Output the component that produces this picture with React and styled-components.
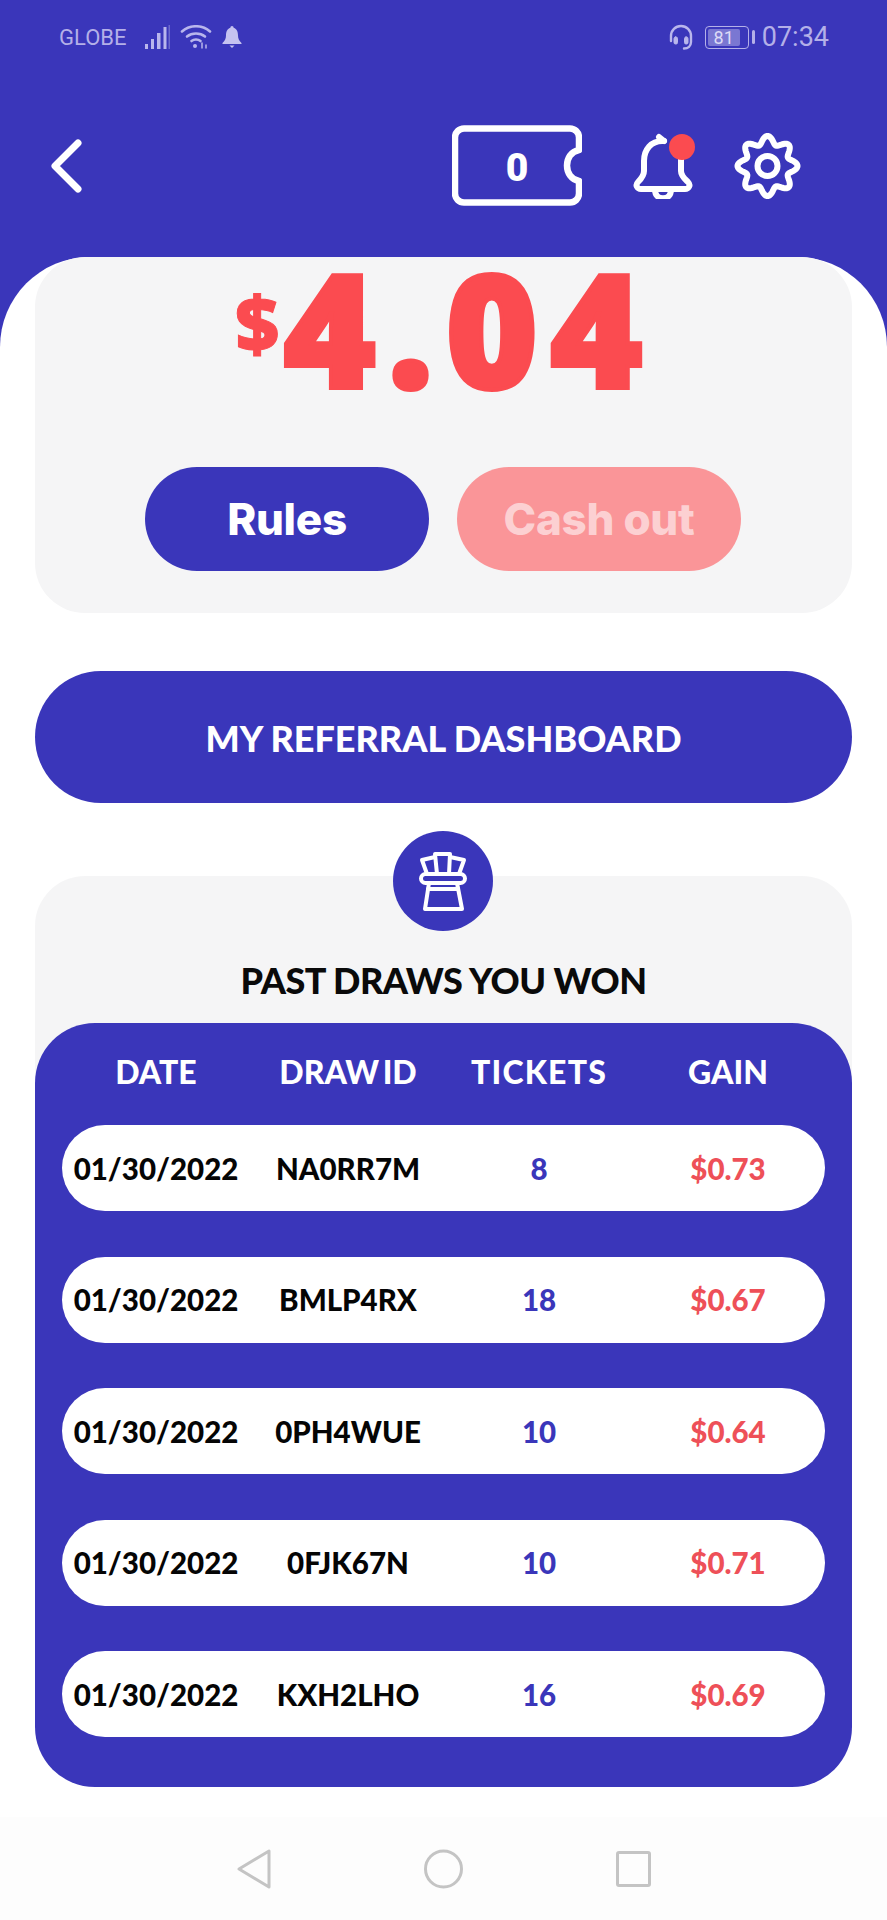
import React from "react";
import styled, { createGlobalStyle } from "styled-components";

const BLUE = "#3a36ba";
const RED = "#fb4b50";
const FONT = `"Lato", "Liberation Sans", sans-serif`;
const HEAVY = `"Inter", "Liberation Sans", sans-serif`;
const BLACK = `"Roboto", "Liberation Sans", sans-serif`;
const AMOUNT = `"Open Sans", "Liberation Sans", sans-serif`;

const GlobalStyle = createGlobalStyle`
  html, body {
    margin: 0;
    padding: 0;
    background: #fff;
  }
  * {
    box-sizing: border-box;
  }
`;

const draws = [
  { id: "NA0RR7M", tickets: 8, gain: "$0.73" },
  { id: "BMLP4RX", tickets: 18, gain: "$0.67" },
  { id: "0PH4WUE", tickets: 10, gain: "$0.64" },
  { id: "0FJK67N", tickets: 10, gain: "$0.71" },
  { id: "KXH2LHO", tickets: 16, gain: "$0.69" },
];

// wavy outline for the settings gear
const gearPath = () => {
  const pts = [];
  for (let i = 0; i < 240; i++) {
    const a = (i / 240) * Math.PI * 2;
    const r = 26 + 4 * Math.cos(8 * a);
    pts.push(`${(33 + r * Math.sin(a)).toFixed(2)} ${(33 - r * Math.cos(a)).toFixed(2)}`);
  }
  return `M${pts.join("L")}Z`;
};

function App() {
  return (
    <>
      <GlobalStyle />
      <Screen>
        <StatusBar>
          <StatusGroup>
            <Carrier>GLOBE</Carrier>
            <svg width="26" height="24" viewBox="0 0 26 24" fill="#b9b6ec">
              <rect x="1" y="19" width="3" height="5" />
              <rect x="7" y="14" width="3" height="10" />
              <rect x="13" y="8" width="3.5" height="16" />
              <rect x="19.5" y="2" width="3" height="22" />
              <rect x="24.5" y="0" width="1.5" height="24" opacity="0.4" />
            </svg>
            <svg width="32" height="24" viewBox="0 0 32 24" fill="none" stroke="#b9b6ec" strokeWidth="2.6" strokeLinecap="round">
              <path d="M2 6.5C10 -0.5 22 -0.5 30 6.5" />
              <path d="M7 11.5C12 7.5 20 7.5 25 11.5" />
              <path d="M11.5 16C14 14 18 14 20.5 16" />
              <circle cx="15" cy="21" r="2" fill="#b9b6ec" stroke="none" />
              <path d="M22 18v5M26 20v3" strokeWidth="1.5" />
            </svg>
            <svg width="20" height="22" viewBox="0 0 20 22" fill="#c5c2f0">
              <path d="M10 0c1 0 1.6.8 1.6 1.8C15 3 16 6 16 9.5c0 3 1 5 3.5 7.5v1H.5v-1C3 14.500 4 12.500 4 9.500 4 6 5 3 8.400 1.800 8.400.8 9 0 10 0Z" />
              <path d="M7.500 19.500h5L10 22Z" />
            </svg>
          </StatusGroup>
          <StatusGroup>
            <svg width="24" height="26" viewBox="0 0 24 26" fill="none" stroke="#b9b6ec" strokeWidth="2.4" strokeLinecap="round">
              <path d="M2 17V12a10 10 0 0 1 20 0v6c0 4-3 6.500-7 6.500" />
              <rect x="5" y="13" width="3.500" height="7" rx="1.500" fill="#b9b6ec" strokeWidth="1" />
              <rect x="15.500" y="13" width="3.500" height="7" rx="1.500" fill="#b9b6ec" strokeWidth="1" />
            </svg>
            <Battery>
              <BatteryLevel>81</BatteryLevel>
            </Battery>
            <Clock>07:34</Clock>
          </StatusGroup>
        </StatusBar>

        <TopBar>
          <BackIcon width="32" height="54" viewBox="0 0 32 54" fill="none" stroke="#fff" strokeWidth="7" strokeLinecap="round" strokeLinejoin="round">
            <path d="M28 4 5 27l23 23" />
          </BackIcon>
          <TicketBox>
            <svg width="130" height="81" viewBox="0 0 130 81" fill="none" stroke="#fff" strokeWidth="6.500" strokeLinejoin="round">
              <path d="M12 3.500H118a9 9 0 0 1 9 9V25c-16 3-16 28 0 31v12.500a9 9 0 0 1-9 9H12a9 9 0 0 1-9-9V12.500a9 9 0 0 1 9-9Z" />
            </svg>
            <TicketCount>0</TicketCount>
          </TicketBox>
          <BellWrap>
            <svg width="60" height="66" viewBox="0 0 60 66" fill="none" stroke="#fff" strokeWidth="6" strokeLinecap="round" strokeLinejoin="round">
              <path d="M31 8C18 7 11 17 11 28v10c0 5-3 8-6 11-3 3-1 7 3 7h44c4 0 6-4 3-7-3-3-7-6-7-11V22" />
              <path d="M26 4l5 4" />
              <path d="M22 57c0 11 16 11 16 0" />
            </svg>
            <RedDot />
          </BellWrap>
          <svg width="67" height="66" viewBox="0 0 66 66" fill="none" stroke="#fff" strokeWidth="6">
            <path d={gearPath()} strokeLinejoin="round" />
            <circle cx="33" cy="33" r="10" />
          </svg>
        </TopBar>

        <Sheet>
          <Content>
            <BalanceCard>
              <Amount>
                <Dollar>$</Dollar>
                <Digits>4.04</Digits>
              </Amount>
              <ButtonRow>
                <PillButton>Rules</PillButton>
                <PillButton $muted>Cash out</PillButton>
              </ButtonRow>
            </BalanceCard>

            <ReferralButton>MY REFERRAL DASHBOARD</ReferralButton>

            <DrawsCard>
              <HatBadge>
                <svg width="48" height="60" viewBox="0 0 48 60" fill="none" stroke="#fff" strokeWidth="4" strokeLinejoin="round" strokeLinecap="round">
                  <rect x="2" y="23" width="44" height="9" rx="4.500" />
                  <path d="M10 32 6 58H43L38 32" />
                  <path d="M9 38H39" />
                  <path d="M16 3H31L30 23H18Z" />
                  <path d="M16 6 3 9 8 23M31 6 45 9 40 23" />
                </svg>
              </HatBadge>
              <DrawsTitle>PAST DRAWS YOU WON</DrawsTitle>
              <DrawsPanel>
                <HeaderRow>
                  <span>DATE</span>
                  <span>DRAW ID</span>
                  <TicketsHead>TICKETS</TicketsHead>
                  <span>GAIN</span>
                </HeaderRow>
                <RowList>
                  {draws.map((d) => (
                    <DrawRow key={d.id}>
                      <span>01/30/2022</span>
                      <span>{d.id}</span>
                      <Tickets>{d.tickets}</Tickets>
                      <Gain>{d.gain}</Gain>
                    </DrawRow>
                  ))}
                </RowList>
              </DrawsPanel>
            </DrawsCard>
          </Content>

          <NavBar>
            <svg width="34" height="40" viewBox="0 0 34 40" fill="none" stroke="#c4c4c4" strokeWidth="3" strokeLinejoin="round">
              <path d="M32 2V38L2 20Z" />
            </svg>
            <svg width="39" height="40" viewBox="0 0 39 40" fill="none" stroke="#c4c4c4" strokeWidth="3">
              <circle cx="19.500" cy="20" r="18" />
            </svg>
            <svg width="35" height="36" viewBox="0 0 35 36" fill="none" stroke="#c4c4c4" strokeWidth="3" strokeLinejoin="round">
              <rect x="1.500" y="1.500" width="32" height="33" rx="1.500" />
            </svg>
          </NavBar>
        </Sheet>
      </Screen>
    </>
  );
}

const Screen = styled.div`
  width: 887px;
  height: 1920px;
  overflow: hidden;
  display: flex;
  flex-direction: column;
  background: ${BLUE};
  font-family: ${FONT};
`;

const StatusBar = styled.div`
  height: 74px;
  padding: 0 58px 0 59px;
  display: flex;
  align-items: center;
  justify-content: space-between;
`;

const StatusGroup = styled.div`
  display: flex;
  align-items: center;
  gap: 10px;
`;

const Carrier = styled.span`
  font: 400 22px "Roboto", sans-serif;
  color: #b4b0e8;
  margin-right: 8px;
`;

const Clock = styled.span`
  font: 400 27px "Roboto", sans-serif;
  color: #b4b0e8;
`;

const Battery = styled.div`
  width: 44px;
  height: 23px;
  padding: 2px;
  border: 1.5px solid #b4b0e8;
  border-radius: 4px;
  margin-left: 2px;
  margin-right: 3px;
  position: relative;

  &::after {
    content: "";
    position: absolute;
    right: -7px;
    top: 3px;
    width: 3px;
    height: 14px;
    border-radius: 2px;
    background: #b4b0e8;
  }
`;

const BatteryLevel = styled.div`
  width: 84%;
  height: 100%;
  border-radius: 2px;
  background: #7a77d2;
  color: #dcdaf6;
  font: 400 18px/17px "Roboto", sans-serif;
  text-align: center;
`;

const TopBar = styled.div`
  height: 183px;
  padding: 0 86px 0 50px;
  display: flex;
  align-items: center;
`;

const BackIcon = styled.svg`
  margin-right: auto;
`;

const TicketBox = styled.div`
  position: relative;
  width: 130px;
  height: 81px;
  margin-right: 51px;
  display: flex;
  align-items: center;
  justify-content: center;

  svg {
    position: absolute;
    inset: 0;
  }
`;

const TicketCount = styled.span`
  font-family: ${BLACK};
  font-size: 39px;
  font-weight: 900;
  color: #fff;
  margin-top: 5px;
`;

const BellWrap = styled.div`
  position: relative;
  width: 60px;
  height: 66px;
  margin-right: 41px;

  svg {
    display: block;
  }
`;

const RedDot = styled.span`
  position: absolute;
  top: 1px;
  right: -2px;
  width: 26px;
  height: 26px;
  border-radius: 50%;
  background: ${RED};
`;

const Sheet = styled.div`
  flex: 1;
  display: flex;
  flex-direction: column;
  background: #fff;
  border-radius: 90px 90px 0 0;
`;

const Content = styled.div`
  flex: 1;
  padding: 0 35px 0 35px;
`;

const BalanceCard = styled.section`
  height: 356px;
  background: #f5f5f6;
  border-radius: 50px;
`;

const Amount = styled.div`
  height: 210px;
  padding-right: 8px;
  display: flex;
  align-items: flex-start;
  justify-content: center;
  color: ${RED};
  font-family: ${AMOUNT};
  font-weight: 800;
`;

const Dollar = styled.span`
  font-size: 76px;
  line-height: 80px;
  margin-top: 26px;
  margin-right: 4px;
  -webkit-text-stroke: 1px ${RED};
`;

const Digits = styled.span`
  font-size: 158px;
  line-height: 180px;
  letter-spacing: 12px;
  margin-right: -11px;
  margin-top: -20px;
  -webkit-text-stroke: 4px ${RED};
`;

const ButtonRow = styled.div`
  display: flex;
  justify-content: center;
  gap: 28px;
  padding-right: 1px;
`;

const PillButton = styled.div`
  width: 284px;
  height: 104px;
  border-radius: 52px;
  display: flex;
  align-items: center;
  justify-content: center;
  font-family: ${HEAVY};
  font-size: 44px;
  font-weight: 800;
  letter-spacing: -0.3px;
  background: ${(p) => (p.$muted ? "#fa9598" : BLUE)};
  color: ${(p) => (p.$muted ? "#fcd0d2" : "#fff")};
`;

const ReferralButton = styled.div`
  margin-top: 58px;
  height: 132px;
  padding-top: 2px;
  border-radius: 66px;
  background: ${BLUE};
  color: #fff;
  display: flex;
  align-items: center;
  justify-content: center;
  font-size: 36px;
  font-weight: 900;
`;

const DrawsCard = styled.section`
  position: relative;
  margin-top: 73px;
  padding-top: 85px;
  background: linear-gradient(#f5f5f6 220px, transparent 220px);
  border-radius: 50px 50px 0 0;
`;

const HatBadge = styled.div`
  position: absolute;
  top: -45px;
  left: calc(50% - 1px);
  transform: translateX(-50%);
  width: 100px;
  height: 100px;
  border-radius: 50%;
  background: ${BLUE};
  display: flex;
  align-items: center;
  justify-content: center;
`;

const DrawsTitle = styled.h2`
  margin: 0 0 24px;
  height: 38px;
  line-height: 38px;
  text-align: center;
  font-size: 36px;
  font-weight: 900;
  letter-spacing: -0.5px;
  color: #0a0a0a;
`;

const DrawsPanel = styled.div`
  padding: 0 27px 50px;
  background: ${BLUE};
  border-radius: 60px;
`;

const columns = `
  display: grid;
  grid-template-columns: 188px 196px 186px 192px;
  align-items: center;
  justify-items: center;
`;

const HeaderRow = styled.div`
  ${columns}
  height: 102px;
  padding-bottom: 6px;
  color: #fff;
  font-size: 32px;
  font-weight: 900;
  word-spacing: -4px;
`;

const TicketsHead = styled.span`
  letter-spacing: 1.2px;
`;

const RowList = styled.div`
  display: flex;
  flex-direction: column;
  gap: 45.5px;
`;

const DrawRow = styled.div`
  ${columns}
  height: 86px;
  border-radius: 43px;
  background: #fff;
  color: #050505;
  font-size: 29.5px;
  font-weight: 900;
`;

const Tickets = styled.span`
  color: ${BLUE};
`;

const Gain = styled.span`
  color: #ee5058;
`;

const NavBar = styled.nav`
  height: 103px;
  background: #fdfdfd;
  display: flex;
  align-items: center;
  justify-content: center;
  gap: 153px;
`;

export default App;
